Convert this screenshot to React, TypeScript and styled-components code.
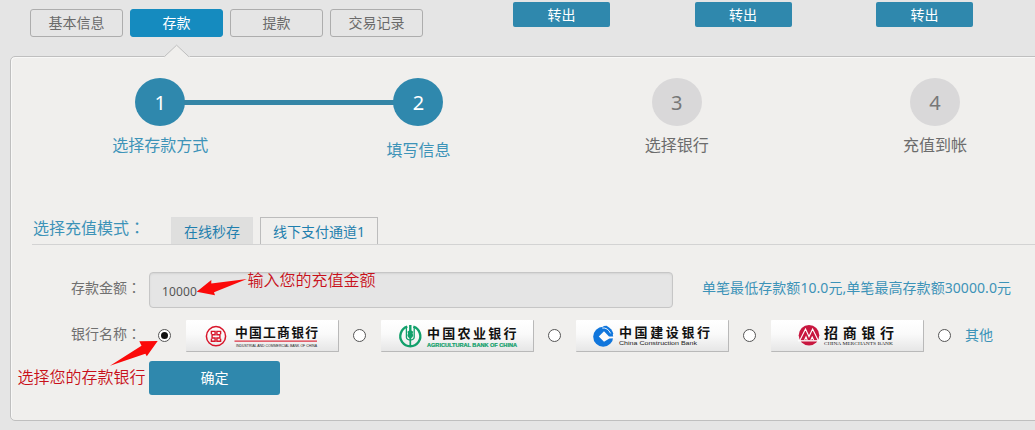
import React, { useState } from "react";
import styled, { createGlobalStyle } from "styled-components";

const teal = "#2f88ad";
const link = "#3d93b8";

const GlobalStyle = createGlobalStyle`
  * { box-sizing: border-box; }
  html, body { margin: 0; height: 430px; overflow: hidden; }
  body {
    background: #e5e5e5;
    color: #666;
    font: 14px/20px "Noto Sans", "Noto Sans CJK SC", sans-serif;
  }
  button, input { font: inherit; }
`;

const Page = styled.main`
  position: relative;
  width: 1035px;
  height: 430px;
  overflow: hidden;
`;

const TopBar = styled.header`
  display: flex;
  align-items: flex-start;
  height: 56px;
  padding-left: 30px;
`;

const Nav = styled.nav`
  display: flex;
  gap: 7px;
  width: 483px;
  padding-top: 9px;
`;

const NavButton = styled.button<{ $active?: boolean }>`
  position: relative;
  width: 93px;
  height: 28px;
  padding: 0;
  line-height: 26px;
  border: 1px solid ${(p) => (p.$active ? "#158bbf" : "#adadad")};
  border-radius: 3px;
  background: ${(p) => (p.$active ? "#158bbf" : "transparent")};
  color: ${(p) => (p.$active ? "#fff" : "#6a6a6a")};
`;

const Pointer = styled.svg`
  position: absolute;
  z-index: 1;
  left: 33px;
  top: 34px;
`;

const Transfers = styled.div`
  display: flex;
  gap: 84.5px;
  padding-top: 2px;
`;

const TransferButton = styled.button`
  width: 97px;
  height: 25px;
  padding: 0;
  border: 0;
  border-radius: 2px;
  background: ${teal};
  color: #fff;
  line-height: 25px;
`;

const Panel = styled.section`
  width: 1040px;
  height: 365px;
  margin-left: 10px;
  padding: 21px 0 0 20px;
  border: 1px solid #bfbfbf;
  border-radius: 5px;
  background: #f0efed;
  box-shadow: inset 1px 1px 0 #f8f8f7;
`;

const Steps = styled.ol`
  display: grid;
  grid-template-columns: repeat(4, 258.3px);
  height: 139px;
  margin: 0;
  padding: 0;
  list-style: none;
`;

const Step = styled.li<{ $done: boolean; $labelGap: number }>`
  display: grid;
  grid-template-columns: 1fr 50px 1fr;
  grid-template-rows: 48px 24px;
  row-gap: ${(p) => p.$labelGap}px;
  align-content: start;
  align-items: center;
  color: ${(p) => (p.$done ? link : "#6c6c6c")};
`;

const StepNumber = styled.span<{ $done: boolean }>`
  grid-column: 2;
  height: 48px;
  border-radius: 50%;
  background: ${(p) => (p.$done ? teal : "#d9d8d9")};
  color: ${(p) => (p.$done ? "#fff" : "#777")};
  font-size: 20px;
  line-height: 49px;
  text-align: center;
`;

const Connector = styled.i<{ $side: "left" | "right" }>`
  grid-row: 1;
  grid-column: ${(p) => (p.$side === "left" ? 1 : 3)};
  height: 5px;
  margin: 0 -1px;
  background: #3485a6;
`;

const StepLabel = styled.span`
  grid-column: 1 / -1;
  grid-row: 2;
  font-size: 16px;
  line-height: 24px;
  text-align: center;
`;

const ModeBar = styled.div`
  display: flex;
  align-items: flex-end;
  height: 28px;
  margin-left: 1px;
  border-bottom: 1px solid #d3d3d3;
`;

const ModeTitle = styled.h2`
  width: 139px;
  margin: 0;
  padding-left: 1px;
  color: ${link};
  font-size: 16px;
  font-weight: 400;
  line-height: 32px;
`;

const Colon = styled.span`
  font-family: "Noto Sans CJK TC", sans-serif;
  line-height: 1;
`;

const ModeTab = styled.button<{ $active: boolean; $width: number }>`
  width: ${(p) => p.$width}px;
  height: 27px;
  margin-right: 7px;
  padding: 0;
  border: solid ${(p) => (p.$active ? "#dedede" : "#bcbcbc")};
  border-width: 1px 1px 0;
  background: ${(p) => (p.$active ? "#dfdfde" : "transparent")};
  color: #1f7fae;
  line-height: 28px;
`;

const Form = styled.form`
  padding-top: 27px;
`;

const Row = styled.div<{ $height: number }>`
  display: flex;
  align-items: flex-start;
  height: ${(p) => p.$height}px;
`;

const Label = styled.label<{ $top: number }>`
  flex: none;
  width: 118px;
  padding: ${(p) => p.$top}px 0 0 40px;
  color: #707070;
  white-space: nowrap;
`;

const AmountInput = styled.input`
  flex: none;
  width: 524px;
  height: 36px;
  padding: 3px 12px 0;
  border: 1px solid #c6c6c6;
  border-radius: 4px;
  outline: 0;
  background: #e5e5e5;
  box-shadow: inset 0 1px 2px #d4d4d4;
  color: #555;
  font-size: 12px;
  letter-spacing: 0.15px;
`;

const Limits = styled.span`
  padding: 6px 0 0 29px;
  color: ${link};
  letter-spacing: 0.06px;
  white-space: nowrap;
`;

const BankOption = styled.label`
  display: flex;
  flex: none;
  align-items: center;
  width: 195px;
  height: 32px;
  padding-left: 9px;
`;

const Radio = styled.input`
  appearance: none;
  flex: none;
  display: grid;
  place-items: center;
  width: 13px;
  height: 13px;
  margin: 0 15px 1px 0;
  border: 1px solid #555;
  border-radius: 50%;
  background: #fff;
  &:checked::after {
    content: "";
    width: 7px;
    height: 7px;
    border-radius: 50%;
    background: #111;
  }
`;

const BankCard = styled.span`
  flex: none;
  width: 153px;
  height: 32px;
  border: solid #b9b9b9;
  border-width: 0 1px 1px 0;
  border-radius: 1px;
  background: linear-gradient(#fff, #fafafa 45%, #e6e6e6);
  svg { display: block; }
`;

const OtherText = styled.span`
  margin: -2px 0 0 -1px;
  color: ${link};
`;

const Submit = styled.button`
  width: 131px;
  height: 34px;
  margin-left: 118px;
  padding: 0;
  border: 0;
  border-radius: 3px;
  background: ${teal};
  color: #fff;
`;

const Note = styled.span<{ $x: number; $y: number }>`
  position: absolute;
  left: ${(p) => p.$x}px;
  top: ${(p) => p.$y}px;
  color: #c8101a;
  font-family: "Noto Sans CJK SC", sans-serif;
  font-size: 16px;
  font-weight: 350;
  line-height: 24px;
  white-space: nowrap;
`;

const Arrows = styled.svg`
  position: absolute;
  inset: 0;
  pointer-events: none;
`;

const LogoText = styled.text`
  font-family: "Noto Sans CJK SC", sans-serif;
  font-weight: 700;
  fill: #111;
`;

const LogoLatin = styled.text<{ $serif?: boolean }>`
  font-family: ${(p) => (p.$serif ? '"Liberation Serif", serif' : '"Liberation Sans", sans-serif')};
`;

const IcbcLogo = () => (
  <svg width="152" height="31" viewBox="0 0 152 31">
    <g fill="none" stroke="#d8152a">
      <circle cx="30" cy="16.2" r="9.6" strokeWidth="1.5" />
      <path
        d="M25.4 14.2v-2.8h3.7v3.4h-3v3.2h3v3.3h-3.7v-2.6M34.6 14.2v-2.8h-3.7v3.4h3v3.2h-3v3.3h3.7v-2.6"
        strokeWidth="1.4"
      />
      <path d="M48.5 21.1H131" stroke="#dd3040" strokeWidth="1.4" />
    </g>
    <LogoText x="49" y="17.4" fontSize="12.8" textLength="83">中国工商银行</LogoText>
    <LogoLatin x="50" y="26.5" fontSize="4" fill="#222" textLength="81" lengthAdjust="spacingAndGlyphs">
      INDUSTRIAL AND COMMERCIAL BANK OF CHINA
    </LogoLatin>
  </svg>
);

const AbcLogo = () => (
  <svg width="152" height="31" viewBox="0 0 152 31">
    <g fill="none" stroke="#12a06b">
      <path d="M26.3 6.7a10 10 0 1 0 6 0" strokeWidth="2.4" />
      <path d="M25.4 7v10.2q0 2.3 3.9 2.9 3.9-.6 3.9-2.9V7" strokeWidth="1.3" />
      <path d="M29.3 18v8" strokeWidth="1.7" />
    </g>
    <path d="M28.1 5h2.4v5.5l1.7 1.2-.6 1.9.6 1.7-.6 1.8-2.3 2-2.3-2-.6-1.8.6-1.7-.6-1.9 1.7-1.2z" fill="#12a06b" />
    <LogoText x="46" y="17.8" fontSize="13" textLength="89.5">中国农业银行</LogoText>
    <LogoLatin x="46" y="26.5" fontSize="5" fontWeight="700" fill="#12a06b" stroke="#12a06b" strokeWidth=".2" textLength="90" lengthAdjust="spacingAndGlyphs">
      AGRICULTURAL BANK OF CHINA
    </LogoLatin>
  </svg>
);

const CcbLogo = () => (
  <svg width="152" height="31" viewBox="0 0 152 31">
    <circle cx="27.2" cy="16.7" r="10" fill="#1076dc" />
    <path d="M28 11.2l5 5.2h6v1.8l-5.6.2-5.4 3.4-5.2-5.2z" fill="#fbfbfb" />
    <path d="M27.6 6l3-.2q5.6 3.2 6.8 8l-3.2 2.4-7.6-8z" fill="#1076dc" />
    <path d="M26.2 8q5.6-.6 8.4 5.4" fill="none" stroke="#fff" strokeWidth=".9" />
    <LogoText x="43" y="17.2" fontSize="13" textLength="91">中国建设银行</LogoText>
    <LogoLatin x="43" y="24.8" fontSize="6.2" fill="#222" textLength="78" lengthAdjust="spacingAndGlyphs">
      China Construction Bank
    </LogoLatin>
  </svg>
);

const CmbLogo = () => (
  <svg width="152" height="31" viewBox="0 0 152 31">
    <circle cx="38" cy="15.2" r="10.3" fill="#c8173f" />
    <path d="M29 20l5.5-11 3.5 7.6L41.6 9 47 20M33.6 20l1.4-3 1.2 3M39.8 20l1.4-3 1.4 3" fill="none" stroke="#fff" strokeWidth="1.1" />
    <path d="M27 20.8h22" stroke="#fff" strokeWidth="1.3" />
    <LogoText x="53" y="18" fontSize="14" textLength="70">招商银行</LogoText>
    <LogoLatin $serif x="53" y="25.3" fontSize="4.3" fill="#222" textLength="69" lengthAdjust="spacingAndGlyphs">
      CHINA MERCHANTS BANK
    </LogoLatin>
  </svg>
);

const tabs = ["基本信息", "存款", "提款", "交易记录"];
const steps = ["选择存款方式", "填写信息", "选择银行", "充值到帐"];
const banks = [
  { id: "icbc", Logo: IcbcLogo },
  { id: "abc", Logo: AbcLogo },
  { id: "ccb", Logo: CcbLogo },
  { id: "cmb", Logo: CmbLogo },
];

export default function App() {
  const [mode, setMode] = useState(0);
  const [amount, setAmount] = useState("10000");
  const [bank, setBank] = useState("icbc");

  return (
    <Page>
      <GlobalStyle />
      <TopBar>
        <Nav>
          {tabs.map((name, i) => (
            <NavButton key={name} $active={i === 1}>
              {name}
              {i === 1 && (
                <Pointer width="26" height="14" viewBox="0 0 26 14">
                  <path d="M0 14V12.6H1L12.6 1 24.2 12.6H26V14z" fill="#f0efed" />
                  <path d="M.5 12.5L12.6 1.2 24.7 12.5" fill="none" stroke="#bfbfbf" />
                </Pointer>
              )}
            </NavButton>
          ))}
        </Nav>
        <Transfers>
          {[1, 2, 3].map((n) => (
            <TransferButton key={n}>转出</TransferButton>
          ))}
        </Transfers>
      </TopBar>

      <Panel>
        <Steps>
          {steps.map((name, i) => (
            <Step key={name} $done={i < 2} $labelGap={i === 1 ? 12 : 7}>
              {i === 1 && <Connector $side="left" />}
              <StepNumber $done={i < 2}>{i + 1}</StepNumber>
              {i === 0 && <Connector $side="right" />}
              <StepLabel>{name}</StepLabel>
            </Step>
          ))}
        </Steps>

        <ModeBar>
          <ModeTitle>
            选择充值模式<Colon>：</Colon>
          </ModeTitle>
          <ModeTab $active={mode === 0} $width={82} onClick={() => setMode(0)}>
            在线秒存
          </ModeTab>
          <ModeTab $active={mode === 1} $width={118} onClick={() => setMode(1)}>
            线下支付通道1
          </ModeTab>
        </ModeBar>

        <Form onSubmit={(e) => e.preventDefault()}>
          <Row $height={48}>
            <Label $top={6} htmlFor="amount">
              存款金额<Colon>：</Colon>
            </Label>
            <AmountInput id="amount" value={amount} onChange={(e) => setAmount(e.target.value)} />
            <Limits>单笔最低存款额10.0元,单笔最高存款额30000.0元</Limits>
          </Row>
          <Row $height={41}>
            <Label as="span" $top={4}>
              银行名称<Colon>：</Colon>
            </Label>
            {banks.map(({ id, Logo }) => (
              <BankOption key={id}>
                <Radio type="radio" name="bank" checked={bank === id} onChange={() => setBank(id)} />
                <BankCard>
                  <Logo />
                </BankCard>
              </BankOption>
            ))}
            <BankOption>
              <Radio type="radio" name="bank" checked={bank === "other"} onChange={() => setBank("other")} />
              <OtherText>其他</OtherText>
            </BankOption>
          </Row>
          <Submit>确定</Submit>
        </Form>
      </Panel>

      <Arrows width="1035" height="430" viewBox="0 0 1035 430" fill="#fb0a0a">
        <path d="M196.7 291.8L211.3 280v3.5L247 279l-33 13.3 1 3z" />
        <path d="M157.7 341l-18.4.3 2.2 4.4-31.5 20 35.3-12 1.5 2.6z" />
      </Arrows>
      <Note $x={247.5} $y={267}>输入您的充值金额</Note>
      <Note $x={17.5} $y={364}>选择您的存款银行</Note>
    </Page>
  );
}
